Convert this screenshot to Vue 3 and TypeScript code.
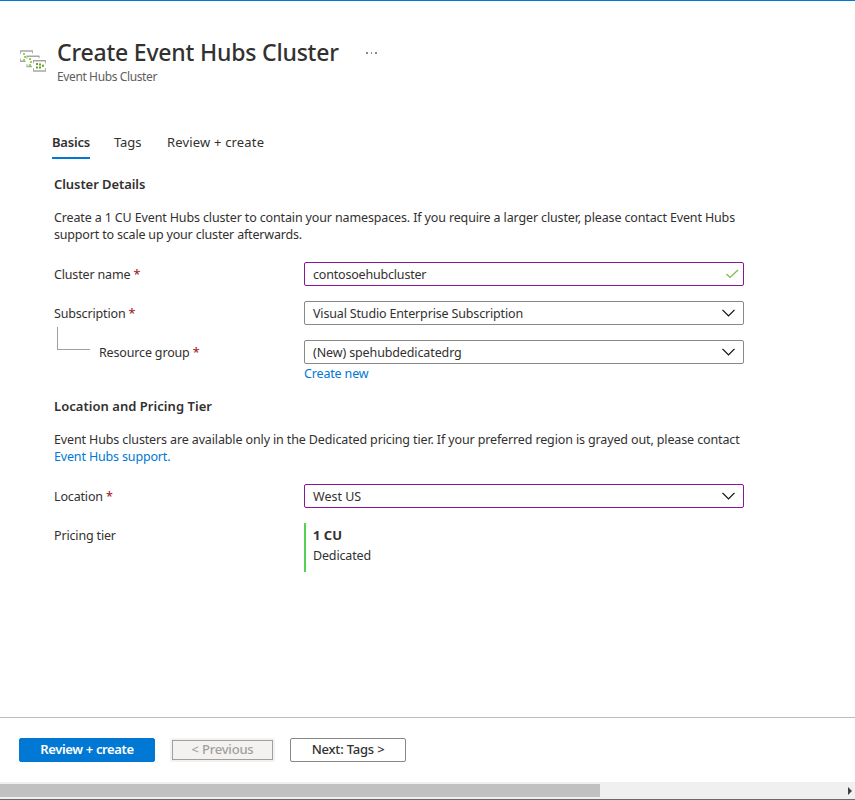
<script setup lang="ts">
import { ref } from 'vue'

interface Tab { id: string; label: string }

const tabs: Tab[] = [
  { id: 'basics', label: 'Basics' },
  { id: 'tags', label: 'Tags' },
  { id: 'review', label: 'Review + create' },
]
const activeTab = ref('basics')
</script>

<template>
  <div class="page">
    <header class="header">
      <svg class="logo" width="28" height="24" viewBox="0 0 28 24">
        <g fill="none" stroke="#b4b4b4" stroke-width="1">
          <path d="M1.500 5V2M13.500 2V4.500M1.500 9.500V12M8 10V7M20 7V9.500M8 15V17.500M14.500 14.500V11.500M26.500 11.500V14.500M14.500 19V22M26.500 22V19" />
        </g>
        <g fill="none" stroke="#a6a6a6" stroke-width="1.500">
          <path d="M1 2H14M1 12.200H6.500M7.500 7.200H20.500M7.500 17.500H13M14 11.800H27M14 22H27" />
        </g>
        <g fill="#90d84a">
          <path d="M4 4h2v2h-2zM5 7h2v2h-2zM4 10h2v2h-2zM10 9h2v2h-2zM11 12h2v2h-2zM10 15h2v2h-2z" />
        </g>
        <g fill="#5fa52a">
          <path d="M17 14h2v2h-2zM17 17.500h2v2h-2zM20 14.500h2v2h-2zM20 17.500h2v2h-2zM23 15.800h2v2h-2z" />
        </g>
      </svg>
      <div class="heading">
        <div class="title-row">
          <h1>Create Event Hubs Cluster</h1>
          <span class="more"><i></i><i></i><i></i></span>
        </div>
        <p class="subtitle">Event Hubs Cluster</p>
      </div>
    </header>

    <nav class="tabs">
      <button
        v-for="tab in tabs"
        :key="tab.id"
        :class="['tab', tab.id, { active: tab.id === activeTab }]"
        @click="activeTab = tab.id"
      >{{ tab.label }}</button>
    </nav>

    <main class="content">
      <h2 class="h-details">Cluster Details</h2>
      <p class="para"><span class="p1">Create a 1 CU Event Hubs cluster to contain your namespaces. If you require a larger cluster, please contact Event Hubs</span><br /><span class="p2">support to scale up your cluster afterwards.</span></p>

      <div class="row">
        <label>Cluster name <b>*</b></label>
        <div class="field changed">
          <span class="v-name">contosoehubcluster</span>
          <svg class="check" width="14" height="10" viewBox="0 0 14 10"><path d="M1.500 5L5 8.500L13 1" fill="none" stroke="#7dbb42" stroke-width="1.2" /></svg>
        </div>
      </div>
      <div class="row">
        <label>Subscription <b>*</b></label>
        <div class="field">
          <span>Visual Studio Enterprise Subscription</span>
          <svg width="13" height="8" viewBox="0 0 13 8"><path d="M0.500 0.900L6.500 6.900L12.500 0.900" fill="none" stroke="#111" stroke-width="1.3" /></svg>
        </div>
      </div>
      <div class="row group">
        <div class="branch"></div>
        <label class="l-group">Resource group <b>*</b></label>
        <div class="field">
          <span class="v-group">(New) spehubdedicatedrg</span>
          <svg width="13" height="8" viewBox="0 0 13 8"><path d="M0.500 0.900L6.500 6.900L12.500 0.900" fill="none" stroke="#111" stroke-width="1.3" /></svg>
        </div>
      </div>
      <a class="link create">Create new</a>

      <h2 class="h-location">Location and Pricing Tier</h2>
      <p class="para"><span class="p3">Event Hubs clusters are available only in the Dedicated pricing tier. If your preferred region is grayed out, please contact</span><br /><a class="link">Event Hubs support.</a></p>

      <div class="row">
        <label>Location <b>*</b></label>
        <div class="field changed">
          <span class="v-loc">West US</span>
          <svg width="13" height="8" viewBox="0 0 13 8"><path d="M0.500 0.900L6.500 6.900L12.500 0.900" fill="none" stroke="#111" stroke-width="1.3" /></svg>
        </div>
      </div>
      <div class="row tier-row">
        <label>Pricing tier</label>
        <div class="tier">
          <strong>1 CU</strong>
          <span>Dedicated</span>
        </div>
      </div>
    </main>

    <footer class="footer">
      <button class="btn primary"><span>Review + create</span></button>
      <button class="btn previous" disabled><span>&lt; Previous</span></button>
      <button class="btn next"><span>Next: Tags &gt;</span></button>
    </footer>

    <div class="scrollbar">
      <div class="thumb"></div>
      <svg width="4" height="8" viewBox="0 0 4 8"><path d="M0 0L4 4L0 8Z" fill="#404040" /></svg>
    </div>
  </div>
</template>

<style>
body { margin: 0; background: #fff; overflow: hidden; }
</style>

<style scoped>
* { box-sizing: border-box; }
.page {
  width: 855px;
  height: 800px;
  display: flex;
  flex-direction: column;
  border-top: 1px solid #0078d4;
  color: #323130;
  font: 12.500px/17px "Noto Sans", "Open Sans", sans-serif;
  letter-spacing: -0.160px;
  white-space: nowrap;
}
h1, h2, p { margin: 0; }
button { font: inherit; color: inherit; cursor: pointer; }
.header { display: flex; height: 132px; padding: 35px 0 0 19px; flex: none; }
.logo { margin-top: 13px; flex: none; }
.heading { margin-left: 10px; }
.title-row { display: flex; align-items: center; height: 32px; }
h1 { width: 282px; font-size: 23px; font-weight: 500; line-height: 32px; letter-spacing: -0.200px; }
.more { display: flex; gap: 3px; margin: 2px 0 0 27px; }
.more i { width: 1.500px; height: 2px; background: #888; }
.subtitle { margin-top: 1px; font-size: 12px; line-height: 16px; color: #605e5c; letter-spacing: -0.380px; }

.tabs { display: flex; gap: 24px; height: 26px; padding-left: 52px; flex: none; }
.tab { padding: 0 0 8px; border: 0; background: none; height: 26px; line-height: 18px; font-size: 13px; text-align: left; letter-spacing: 0; }
.tab.basics { width: 38px; }
.tab.tags { width: 29px; letter-spacing: -0.100px; }
.tab.review { letter-spacing: 0.170px; }
.tab.active { font-weight: 600; border-bottom: 2px solid #0078d4; padding-bottom: 6px; letter-spacing: -0.200px; }

.content { padding: 16px 0 0 54px; width: 744px; flex: 1; }
h2 { font-size: 13px; line-height: 18px; font-weight: 600; }
.h-details { letter-spacing: -0.070px; }
.h-location { letter-spacing: 0.040px; }
.para { margin-top: 16px; height: 34px; margin-bottom: 19px; }
.p1 { letter-spacing: -0.137px; }
.p2 { letter-spacing: -0.180px; }
.p3 { letter-spacing: -0.130px; }
.row { display: flex; height: 24px; margin-bottom: 15px; align-items: center; }
.row label { width: 250px; flex: none; }
.row label b { color: #a4262c; font-weight: 500; }
.field {
  display: flex;
  align-items: center;
  justify-content: space-between;
  flex: 1;
  height: 24px;
  padding: 0 8px;
  border: 1px solid #8a8886;
  border-radius: 2px;
}
.field.changed { border-color: #881798; }
.v-name { letter-spacing: -0.190px; }
.v-group { letter-spacing: -0.120px; }
.v-loc { letter-spacing: 0; }
.check { margin-right: -4px; }
.group { margin-bottom: 0; }
.branch { align-self: flex-start; width: 33px; height: 23px; margin: -13px 9px 0 3px; border: solid #a19f9d; border-width: 0 0 1px 1px; }
.row .l-group { width: 205px; }
.link { color: #0078d4; }
.create { display: block; margin: 1px 0 15px 250px; }
.tier-row { height: 49px; align-items: flex-start; }
.tier-row label { padding-top: 4px; }
.tier { display: flex; flex-direction: column; height: 49px; padding: 2px 0 0 7px; border-left: 2px solid #54d254; line-height: 20px; }
.tier strong { height: 21px; font-size: 13px; letter-spacing: 0; }

.footer { display: flex; align-items: flex-start; height: 65px; padding: 20px 0 0 19px; border-top: 1px solid #bcbcbc; flex: none; }
.btn { height: 24px; padding: 0 0 2px; border: 1px solid #8a8886; border-radius: 2px; background: #fff; line-height: 20px; font-size: 13px; letter-spacing: -0.200px; }
.primary { width: 136px; background: #0078d4; border-color: #0078d4; color: #fff; font-weight: 600; letter-spacing: -0.350px; }
.previous { width: 105px; margin: 0 15px; padding: 1px; border-color: #f3f2f1; background: #f3f2f1; color: #a19f9d; font-weight: 500; }
.previous span { display: block; border: 1px solid #a19f9d; height: 20px; line-height: 16px; }
.next { width: 116px; font-weight: 500; }

.scrollbar { display: flex; align-items: center; justify-content: space-between; height: 18px; padding-right: 3px; background: #f0f0f0; border-bottom: 1px solid #6b696b; flex: none; }
.thumb { width: 600px; height: 13px; background: #c1c1c1; }
</style>
